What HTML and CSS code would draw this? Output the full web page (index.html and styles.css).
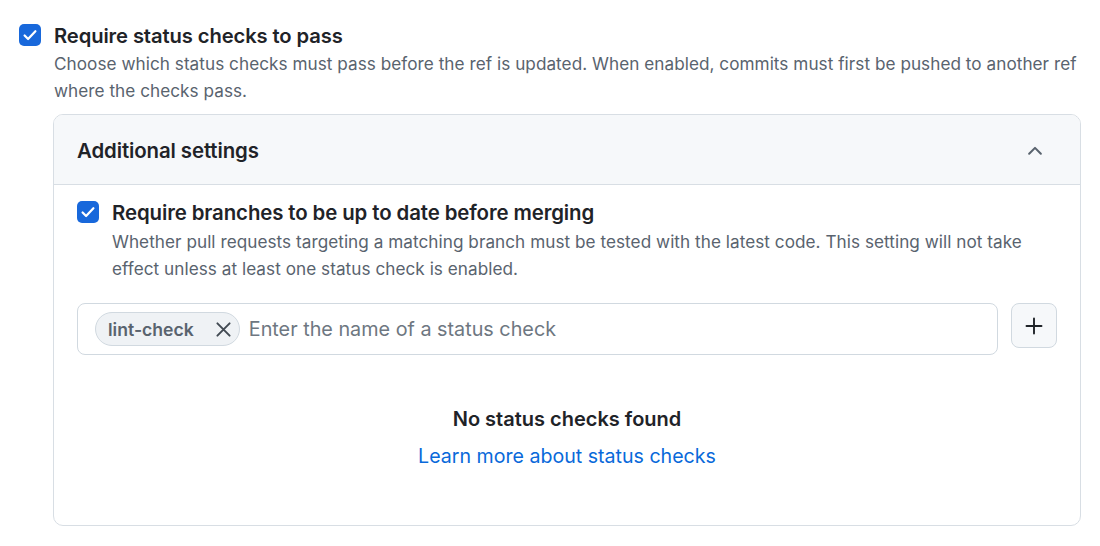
FILE: index.html
```html
<!DOCTYPE html>
<html>
<head>
<meta charset="utf-8">
<link rel="stylesheet" href="styles.css">
</head>
<body>
<div class="page">
  <div class="option">
    <span class="checkbox">
      <svg viewBox="0 0 16 16" width="16" height="16"><path d="M3.2 8.4l3.1 3.1 6.5-6.8" fill="none" stroke="#fff" stroke-width="2" stroke-linecap="round" stroke-linejoin="round"/></svg>
    </span>
    <div class="option-text">
      <div class="option-title">Require status checks to pass</div>
      <div class="option-desc">Choose which status checks must pass before the ref is updated. When enabled, commits must first be pushed to another ref where the checks pass.</div>
    </div>
  </div>

  <div class="panel">
    <div class="panel-header">
      <span class="panel-title">Additional settings</span>
      <svg class="chevron" viewBox="0 0 16 16" width="22" height="22"><path fill="#59636e" d="M3.22 10.53a.749.749 0 0 1 0-1.06l4.25-4.25a.749.749 0 0 1 1.06 0l4.25 4.25a.749.749 0 0 1-1.06 1.06L8 6.811 4.28 10.53a.749.749 0 0 1-1.06 0Z"/></svg>
    </div>
    <div class="panel-body">
      <div class="option inner">
        <span class="checkbox">
          <svg viewBox="0 0 16 16" width="16" height="16"><path d="M3.2 8.4l3.1 3.1 6.5-6.8" fill="none" stroke="#fff" stroke-width="2" stroke-linecap="round" stroke-linejoin="round"/></svg>
        </span>
        <div class="option-text">
          <div class="option-title">Require branches to be up to date before merging</div>
          <div class="option-desc">Whether pull requests targeting a matching branch must be tested with the latest code. This setting will not take effect unless at least one status check is enabled.</div>
        </div>
      </div>

      <div class="input-row">
        <div class="input">
          <span class="chip">lint-check
            <svg class="chip-x" viewBox="0 0 16 16" width="16" height="16"><path d="M1.5 1.5l13 13M14.5 1.5l-13 13" stroke="#424a53" stroke-width="2.1" stroke-linecap="round"/></svg>
          </span>
          <span class="placeholder">Enter the name of a status check</span>
        </div>
        <button class="add-btn">
          <svg viewBox="0 0 18 18" width="18" height="18"><path d="M9 1.5v15M1.5 9h15" stroke="#1f2328" stroke-width="1.9" stroke-linecap="round"/></svg>
        </button>
      </div>

      <div class="empty">
        <div class="empty-title">No status checks found</div>
        <a class="empty-link" href="#">Learn more about status checks</a>
      </div>
    </div>
  </div>
</div>
</body>
</html>
```

FILE: styles.css
```css
* { box-sizing: border-box; }
html, body { margin: 0; padding: 0; background: #ffffff; }
body {
  font-family: Inter, "Noto Sans", "Liberation Sans", sans-serif;
  color: #1f2328;
}
.page {
  padding: 23px 10px 0 19px;
  width: 1100px;
}
.option {
  display: flex;
  align-items: flex-start;
  gap: 13px;
}
.checkbox {
  flex: none;
  width: 22px;
  height: 22px;
  border-radius: 5px;
  background: #1868db;
  display: flex;
  align-items: center;
  justify-content: center;
  margin-top: 1px;
}
.checkbox svg { width: 18px; height: 18px; }
.option-title {
  font-size: 20.2px;
  font-weight: 600;
  line-height: 26px;
  letter-spacing: -0.1px;
}
.option-desc {
  margin-top: 1px;
  font-size: 17.15px;
  line-height: 27px;
  color: #59636e;
  letter-spacing: 0.05px;
}
.inner .option-title { font-size: 20.4px; }
.inner .option-desc { margin-top: 2px; }
.panel {
  margin: 10px 0 0 34px;
  width: 1028px;
  height: 412px;
  border: 1px solid #d8dee4;
  border-radius: 10px;
  overflow: hidden;
}
.panel-header {
  height: 70px;
  background: #f6f8fa;
  border-bottom: 1px solid #d8dee4;
  display: flex;
  align-items: center;
  justify-content: space-between;
  padding: 2px 34px 0 23px;
}
.panel-title {
  font-size: 20.4px;
  font-weight: 600;
  letter-spacing: -0.1px;
}
.panel-body {
  padding: 15px 23px 0 23px;
}
.option.inner { gap: 13px; }
.input-row {
  margin-top: 21px;
  display: flex;
  align-items: flex-start;
  gap: 13px;
}
.input {
  flex: 1;
  height: 52px;
  border: 1px solid #d1d9e0;
  border-radius: 8px;
  display: flex;
  align-items: center;
  padding: 0 0 0 17px;
  gap: 9px;
}
.chip {
  display: inline-flex;
  align-items: center;
  height: 34px;
  padding: 0 8px 0 12px;
  border: 1px solid #d1d9e0;
  border-radius: 17px;
  background: #eff2f5;
  font-size: 17.6px;
  font-weight: 600;
  color: #59636e;
  gap: 22px;
}
.chip-x { width: 15px; height: 15px; }
.placeholder {
  font-size: 19.8px;
  color: #6e7781;
}
.add-btn {
  flex: none;
  width: 46px;
  height: 45px;
  border: 1px solid #d1d9e0;
  border-radius: 8px;
  background: #f6f8fa;
  display: flex;
  align-items: center;
  justify-content: center;
  padding: 0;
}
.add-btn svg { width: 18px; height: 18px; }
.empty {
  margin-top: 49px;
  display: flex;
  flex-direction: column;
  align-items: center;
}
.empty-title {
  font-size: 20px;
  font-weight: 600;
  line-height: 30px;
}
.empty-link {
  margin-top: 8px;
  font-size: 19.6px;
  line-height: 28px;
  color: #0969da;
  text-decoration: none;
}
```
